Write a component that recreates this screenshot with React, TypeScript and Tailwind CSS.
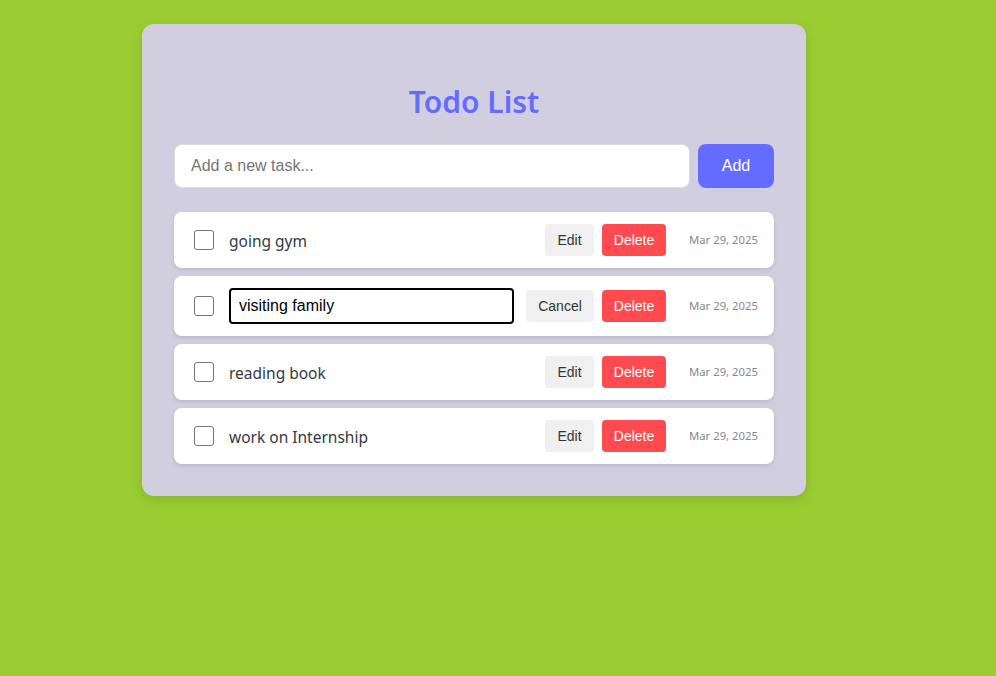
import React from "react";

const tasks = [
  { text: "going gym", editing: false },
  { text: "visiting family", editing: true },
  { text: "reading book", editing: false },
  { text: "work on Internship", editing: false },
];

export default function App() {
  return (
    <div className="min-h-[676px] w-full bg-[#9acd32] pt-6" style={{ fontFamily: '"Noto Sans", sans-serif' }}>
      <div className="ml-[142px] w-[664px] rounded-xl bg-[#d1cfdf] px-8 pt-8 pb-8 shadow-[0_4px_12px_rgba(0,0,0,0.12)]">
        <h1 className="mt-6 mb-6 pt-[2px] text-center text-[30px] leading-[40px] font-semibold text-[#646cff]">Todo List</h1>
        <div className="-mt-[2px] flex gap-2">
          <input
            className="h-11 flex-1 rounded-lg border border-[#dddddd] bg-white px-4 text-base text-black outline-none placeholder:text-[#757575]"
            style={{ fontFamily: '"Liberation Sans", Arial, sans-serif' }}
            placeholder="Add a new task..."
          />
          <button
            className="h-11 w-[76px] rounded-lg bg-[#646cff] text-base text-white"
            style={{ fontFamily: '"Liberation Sans", Arial, sans-serif' }}
          >
            Add
          </button>
        </div>
        <ul className="mt-6 flex flex-col gap-2">
          {tasks.map((t) => (
            <li
              key={t.text}
              className={`flex items-center rounded-lg bg-white pl-5 pr-4 shadow-[0_2px_4px_rgba(0,0,0,0.1)] ${t.editing ? "h-[60px]" : "h-14"}`}
            >
              <span className="h-5 w-5 shrink-0 rounded-[3px] border border-[#767676] bg-white" />
              {t.editing ? (
                <>
                  <input
                    className="ml-[15px] h-9 w-[285px] rounded border-2 border-black px-2 text-base text-black outline-none"
                    style={{ fontFamily: '"Liberation Sans", Arial, sans-serif' }}
                    defaultValue={t.text}
                  />
                  <div className="flex-1" />
                  <button
                    className="h-8 w-[68px] rounded bg-[#f0f0f0] text-sm text-[#333]"
                    style={{ fontFamily: '"Liberation Sans", Arial, sans-serif' }}
                  >
                    Cancel
                  </button>
                </>
              ) : (
                <>
                  <span className="ml-[15px] flex-1 pt-1 text-[15.5px] text-[#333a45]">{t.text}</span>
                  <button
                    className="h-8 w-[49px] rounded bg-[#f0f0f0] text-sm text-[#333]"
                    style={{ fontFamily: '"Liberation Sans", Arial, sans-serif' }}
                  >
                    Edit
                  </button>
                </>
              )}
              <button
                className="ml-2 h-8 w-16 rounded bg-[#ff4b50] text-sm text-white"
                style={{ fontFamily: '"Liberation Sans", Arial, sans-serif' }}
              >
                Delete
              </button>
              <span className="ml-[23px] w-[69px] whitespace-nowrap text-[11.3px] text-[#888888]">Mar 29, 2025</span>
            </li>
          ))}
        </ul>
      </div>
    </div>
  );
}
